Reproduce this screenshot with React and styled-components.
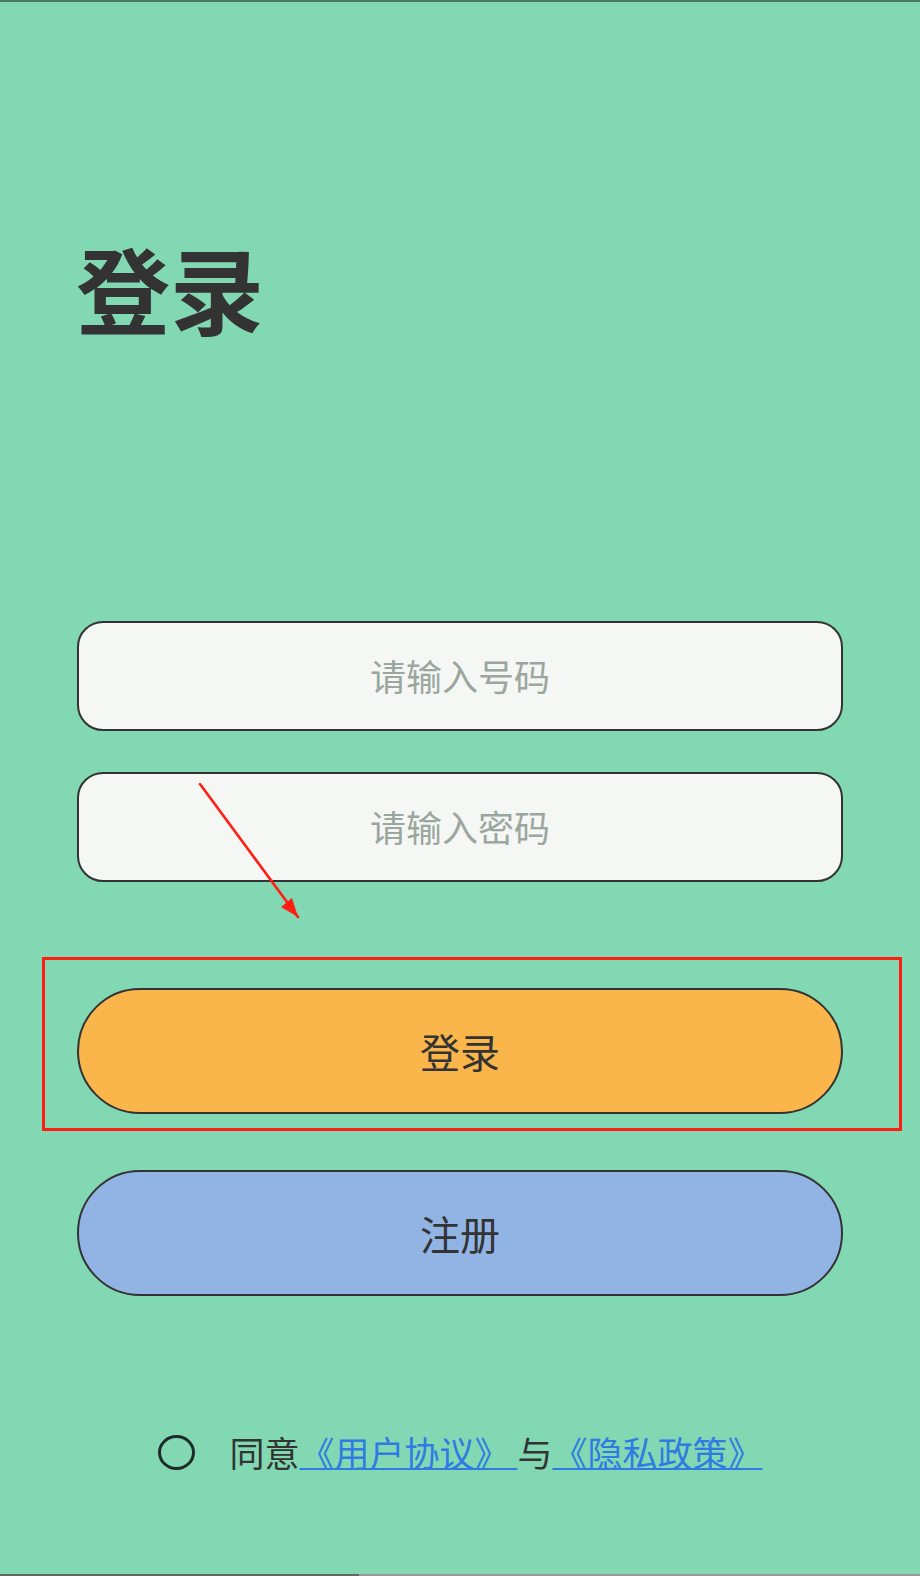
import styled, { createGlobalStyle } from 'styled-components';

const GlobalStyle = createGlobalStyle`
    html, body {
        margin: 0;
        padding: 0;
        background: #81d8b2;
    }

    * {
        box-sizing: border-box;
    }
`

export default function App() {
    return (
        <>
            <GlobalStyle />
            <Page>
                <Title>登录</Title>

                <Form>
                    <Field placeholder="请输入号码" />
                    <Field type="password" placeholder="请输入密码" />
                </Form>

                <Actions>
                    <PillButton $bg="#fbb64b">登录</PillButton>
                    <PillButton $bg="#92b4e4">注册</PillButton>
                </Actions>

                <Agreement>
                    <Radio />
                    <AgreeText>
                        同意<a href="#">《用户协议》 </a>与<a href="#">《隐私政策》 </a>
                    </AgreeText>
                </Agreement>

                <HomeBar>
                    <span />
                    <span />
                </HomeBar>

                <Highlight />
                <Arrow width="110" height="140" viewBox="0 0 110 140">
                    <path d="M5 5 L103 138" stroke="#ff1e14" strokeWidth="2.6" strokeLinecap="round" fill="none" />
                    <path d="M103 138 L86 128 L97 119 Z" fill="#ff1e14" />
                </Arrow>
            </Page>
        </>
    )
}

const Page = styled.div`
    position: relative;
    height: 1576px;
    display: flex;
    flex-direction: column;
    border-top: 2px solid #4a7a66;
    font-family: "Noto Sans CJK SC", "Noto Sans", sans-serif;
    color: #333;
    overflow: hidden;
`

const Title = styled.h1`
    margin: 238px 0 0 76px;
    font-size: 94px;
    font-weight: 700;
    line-height: 94px;
    color: #333;
`

const Form = styled.div`
    display: flex;
    flex-direction: column;
    gap: 41px;
    margin: 287px 77px 0 77px;
`

const Field = styled.input`
    width: 100%;
    height: 110px;
    padding: 0 0 3px;
    border: 2px solid #333;
    border-radius: 26px;
    background: #f5f7f4;
    font-family: inherit;
    font-size: 36px;
    text-align: center;
    color: #333;
    outline: none;

    &::placeholder {
        color: #9ba69f;
    }
`

const Actions = styled.div`
    display: flex;
    flex-direction: column;
    gap: 56px;
    margin: 106px 77px 0 77px;
`

const PillButton = styled.button`
    width: 100%;
    height: 126px;
    border: 2px solid #333;
    border-radius: 63px;
    background: ${(p) => p.$bg};
    font-family: inherit;
    font-size: 40px;
    color: #333;
    cursor: pointer;
`

const Agreement = styled.div`
    display: flex;
    align-items: center;
    justify-content: center;
    gap: 35px;
    margin-top: 136px;
`

const Radio = styled.span`
    width: 37px;
    height: 35px;
    border: 3px solid #1f2a2a;
    border-radius: 50%;
`

const AgreeText = styled.p`
    margin: 0;
    font-size: 35px;
    line-height: 40px;
    color: #333;

    a {
        color: #2f7be3;
        text-decoration: underline;
        text-decoration-thickness: 2px;
    }
`

const HomeBar = styled.div`
    margin-top: auto;
    display: flex;
    height: 2px;

    span:first-child {
        width: 359px;
        background: #5f6a64;
    }

    span:last-child {
        flex: 1;
        background: #979a98;
    }
`

const Highlight = styled.div`
    position: absolute;
    left: 42px;
    top: 955px;
    width: 860px;
    height: 174px;
    border: 3px solid #ff1e14;
    pointer-events: none;
`

const Arrow = styled.svg`
    position: absolute;
    left: 195px;
    top: 777px;
    pointer-events: none;
`
